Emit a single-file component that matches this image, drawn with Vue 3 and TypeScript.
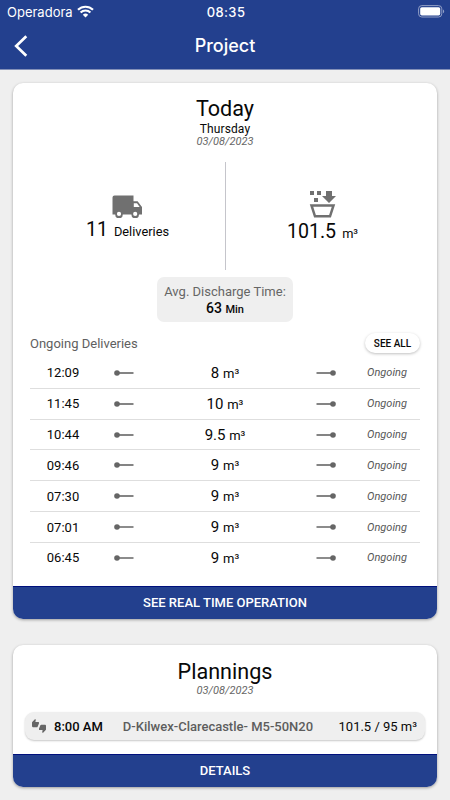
<script setup lang="ts">
interface Delivery {
  time: string
  volume: string
}

const deliveries: Delivery[] = [
  { time: '12:09', volume: '8' },
  { time: '11:45', volume: '10' },
  { time: '10:44', volume: '9.5' },
  { time: '09:46', volume: '9' },
  { time: '07:30', volume: '9' },
  { time: '07:01', volume: '9' },
  { time: '06:45', volume: '9' },
]
</script>

<template>
  <div class="screen">
    <header class="header">
      <div class="status">
        <div class="carrier">
          <span>Operadora</span>
          <svg class="wifi" viewBox="0 0 17 13">
            <path d="M1 4.8a10.7 10.7 0 0 1 15 0" />
            <path d="M3.6 7.500a7 7 0 0 1 9.800 0" />
            <path class="dot" d="M8.500 12.600 5.800 9.800a3.900 3.900 0 0 1 5.400 0z" />
          </svg>
        </div>
        <span class="clock">08:35</span>
        <div class="battery-side">
          <svg class="battery" viewBox="0 0 27 13">
            <rect class="shell" x=".6" y=".6" width="23.2" height="11.4" rx="3.2" />
            <rect class="charge" x="2.2" y="2.2" width="20" height="8.2" rx="1.6" />
            <path class="cap" d="M25 4.400c1.600.600 1.600 3.200 0 3.800z" />
          </svg>
        </div>
      </div>
      <nav class="nav">
        <button class="back" aria-label="Back">
          <svg viewBox="0 0 14 22"><path d="M12.300 1.200 2.200 11l10.100 9.800" /></svg>
        </button>
        <h1>Project</h1>
      </nav>
    </header>

    <main class="content">
      <section class="card today">
        <h2>Today</h2>
        <p class="weekday">Thursday</p>
        <p class="date">03/08/2023</p>

        <div class="stats">
          <div class="stat">
            <svg class="truck" viewBox="0 0 30 22">
              <path
                fill-rule="evenodd"
                d="M2.500 0H21.500V5.800H25.600L30 11.500V19H27a3.800 3.800 0 0 1-7.600 0H10.800a3.800 3.800 0 0 1-7.600 0H.500V2A2 2 0 0 1 2.500 0zM21.800 7.700V11.500H27.700L25 7.700zM7 16.300a2.100 2.100 0 1 0 0 4.200 2.100 2.100 0 0 0 0-4.200zM23.200 16.300a2.100 2.100 0 1 0 0 4.200 2.100 2.100 0 0 0 0-4.200z"
              />
            </svg>
            <p class="figure"><span class="number">11</span><span class="unit">Deliveries</span></p>
          </div>
          <div class="stat volume">
            <svg class="bucket" viewBox="0 0 27 28">
              <path d="M1 1h4v4H1zM8 1h4v4H8zM5 8h4v4H5zM17 1h6v5h4l-7 7-7-7h4z" />
              <path class="tub" d="M2.500 15.500H24.500L21 26.300H6z" />
            </svg>
            <p class="figure"><span class="number">101.5</span><span class="unit">m³</span></p>
          </div>
        </div>

        <div class="average">
          <p>Avg. Discharge Time:</p>
          <p class="average-value">63 <small>Min</small></p>
        </div>

        <div class="list-head">
          <span>Ongoing Deliveries</span>
          <button class="see-all">SEE ALL</button>
        </div>
        <ul class="list">
          <li v-for="delivery in deliveries" :key="delivery.time">
            <span class="time">{{ delivery.time }}</span>
            <svg class="link" viewBox="0 0 20 6">
              <circle cx="3" cy="3" r="2.800" /><path d="M3 2.200H19.500V3.800H3z" />
            </svg>
            <span class="amount">{{ delivery.volume }} <small>m³</small></span>
            <svg class="link end" viewBox="0 0 20 6">
              <circle cx="17" cy="3" r="2.800" /><path d="M.500 2.200H17V3.800H.500z" />
            </svg>
            <em>Ongoing</em>
          </li>
        </ul>
        <button class="action">SEE REAL TIME OPERATION</button>
      </section>

      <section class="card plannings">
        <h2>Plannings</h2>
        <p class="date">03/08/2023</p>
        <div class="plan">
          <svg class="thumbs" viewBox="0 0 24 24">
            <path
              d="M12 6c0-.55-.45-1-1-1H5.820l.660-3.180.020-.230c0-.310-.130-.590-.330-.800L5.380 0 .440 4.940C.170 5.210 0 5.590 0 6v6.500c0 .830.670 1.500 1.500 1.500h6.750c.620 0 1.150-.380 1.380-.910l2.260-5.290c.070-.170.110-.360.110-.550V6zm10.500 4h-6.750c-.620 0-1.150.380-1.380.910l-2.260 5.290c-.070.170-.110.360-.110.550V18c0 .550.450 1 1 1h5.180l-.660 3.180-.020.240c0 .310.130.590.330.800l.790.780 4.940-4.940c.270-.270.440-.650.440-1.060v-6.500c0-.830-.670-1.500-1.500-1.500z"
            />
          </svg>
          <span class="hour">8:00 AM</span>
          <span class="mix">D-Kilwex-Clarecastle- M5-50N20</span>
          <span class="total">101.5 / 95 m³</span>
        </div>
        <button class="action">DETAILS</button>
      </section>
    </main>
  </div>
</template>

<style>
body {
  margin: 0;
  background: #efefef;
}
</style>

<style scoped>
.screen {
  height: 800px;
  overflow: hidden;
  background: #efefef;
  color: #080808;
  font-family: Roboto, sans-serif;
}
h1, h2, p, ul {
  margin: 0;
  padding: 0;
}
button {
  border: 0;
  padding: 0;
  font-family: inherit;
}
svg {
  display: block;
}
.header {
  box-sizing: border-box;
  height: 70px;
  background: #23408e;
  border-bottom: 1px solid #8390b8;
  color: #fff;
  font-family: Inter, sans-serif;
}
.status {
  display: grid;
  grid-template-columns: 1fr auto 1fr;
  align-items: center;
  height: 23px;
  padding: 0 5px 0 7px;
  font-size: 13px;
}
.carrier {
  display: flex;
  align-items: center;
  gap: 4px;
}
.wifi {
  width: 17px;
  height: 13px;
  fill: none;
  stroke: #fff;
  stroke-width: 2.2;
}
.wifi .dot {
  fill: #fff;
  stroke: none;
}
.clock {
  font-weight: 500;
  letter-spacing: 0.4px;
}
.battery-side {
  display: flex;
  justify-content: flex-end;
}
.battery {
  width: 27px;
  height: 13px;
}
.shell {
  fill: none;
  stroke: #929fc6;
}
.charge {
  fill: #fff;
}
.cap {
  fill: #929fc6;
}
.nav {
  display: grid;
  grid-template-columns: 1fr auto 1fr;
  align-items: center;
  height: 45px;
  padding: 0 14px;
}
.back {
  width: 14px;
  background: none;
}
.back svg {
  width: 14px;
  height: 22px;
  fill: none;
  stroke: #fff;
  stroke-width: 2.7;
}
h1 {
  font-size: 18px;
  font-weight: 500;
  line-height: 24px;
}
.content {
  display: flex;
  flex-direction: column;
  gap: 26px;
  padding: 13px;
}
.card {
  display: flex;
  flex-direction: column;
  box-sizing: border-box;
  overflow: hidden;
  border-radius: 10px;
  background: #fff;
  box-shadow: 0 1px 3px rgba(0, 0, 0, 0.35);
  text-align: center;
}
.today {
  height: 536px;
  padding-top: 12px;
}
.plannings {
  height: 142px;
  padding-top: 13px;
}
h2 {
  font-size: 21.6px;
  font-weight: 400;
  line-height: 27px;
}
.weekday {
  font-size: 12px;
  line-height: 14px;
  letter-spacing: 0.1px;
}
.date {
  color: #666;
  font-size: 11px;
  font-style: italic;
  line-height: 12px;
}
.stats {
  display: grid;
  grid-template-columns: 1fr 1fr;
  height: 108px;
  margin-top: 14px;
}
.stat {
  display: flex;
  flex-direction: column;
  align-items: center;
  padding: 33px 0 0 17px;
  fill: #707070;
}
.stat.volume {
  padding: 28px 18px 0 0;
  border-left: 1px solid #c5c5cb;
}
.truck {
  width: 30px;
  height: 23px;
  margin-right: 2px;
}
.bucket {
  width: 27px;
  height: 28px;
  margin-bottom: 2px;
}
.tub {
  fill: none;
  stroke: #707070;
  stroke-width: 2.5;
}
.figure {
  display: flex;
  align-items: baseline;
  gap: 6px;
  line-height: 24px;
}
.number {
  font-size: 19.6px;
}
.unit {
  font-size: 12.8px;
}
.average {
  align-self: center;
  box-sizing: border-box;
  width: 136px;
  height: 45px;
  margin-top: 7px;
  padding-top: 6px;
  border-radius: 7px;
  background: #efefef;
  color: #666;
  font-size: 13px;
  line-height: 17px;
}
.average-value {
  color: #080808;
  font-size: 14px;
  font-weight: 500;
}
.average-value small {
  font-size: 11px;
}
.list-head {
  display: flex;
  align-items: center;
  justify-content: space-between;
  height: 20px;
  margin: 11px 17px 0;
  color: #606060;
  font-size: 13px;
}
.see-all {
  width: 55px;
  height: 20px;
  border-radius: 10px;
  background: #fff;
  box-shadow: 0 1px 3px rgba(0, 0, 0, 0.25);
  color: #080808;
  font-size: 10px;
  font-weight: 500;
}
.list {
  margin: 5px 17px 0;
  list-style: none;
}
.list li {
  display: grid;
  grid-template-columns: 66px 56px 1fr 56px 66px;
  align-items: center;
  justify-items: center;
  box-sizing: border-box;
  height: 30.83px;
  border-bottom: 1px solid #dedede;
}
.list li:last-child {
  border-bottom-color: transparent;
}
.time {
  font-size: 13px;
}
.link {
  width: 20px;
  height: 6px;
  fill: #666;
}
.amount {
  font-size: 15px;
}
.amount small {
  font-size: 13px;
}
.list em {
  color: #555;
  font-size: 11px;
}
.action {
  height: 33px;
  margin-top: auto;
  padding-bottom: 2px;
  flex: none;
  border-top: 1px solid #00107c;
  background: #23408e;
  color: #fff;
  font-size: 13px;
  font-weight: 500;
}
.plan {
  display: flex;
  align-items: center;
  box-sizing: border-box;
  height: 28px;
  margin: 15px 12px 0;
  padding: 0 8px 0 7px;
  border-radius: 9px;
  background: #efefef;
  box-shadow: 0 1px 2px rgba(0, 0, 0, 0.22);
  font-size: 13px;
}
.thumbs {
  width: 14px;
  height: 14px;
  fill: #666;
}
.hour {
  margin-left: 8px;
  font-weight: 500;
}
.mix {
  margin-left: 20px;
  color: #5d5d5d;
  font-weight: 500;
}
.total {
  margin-left: auto;
}
</style>
